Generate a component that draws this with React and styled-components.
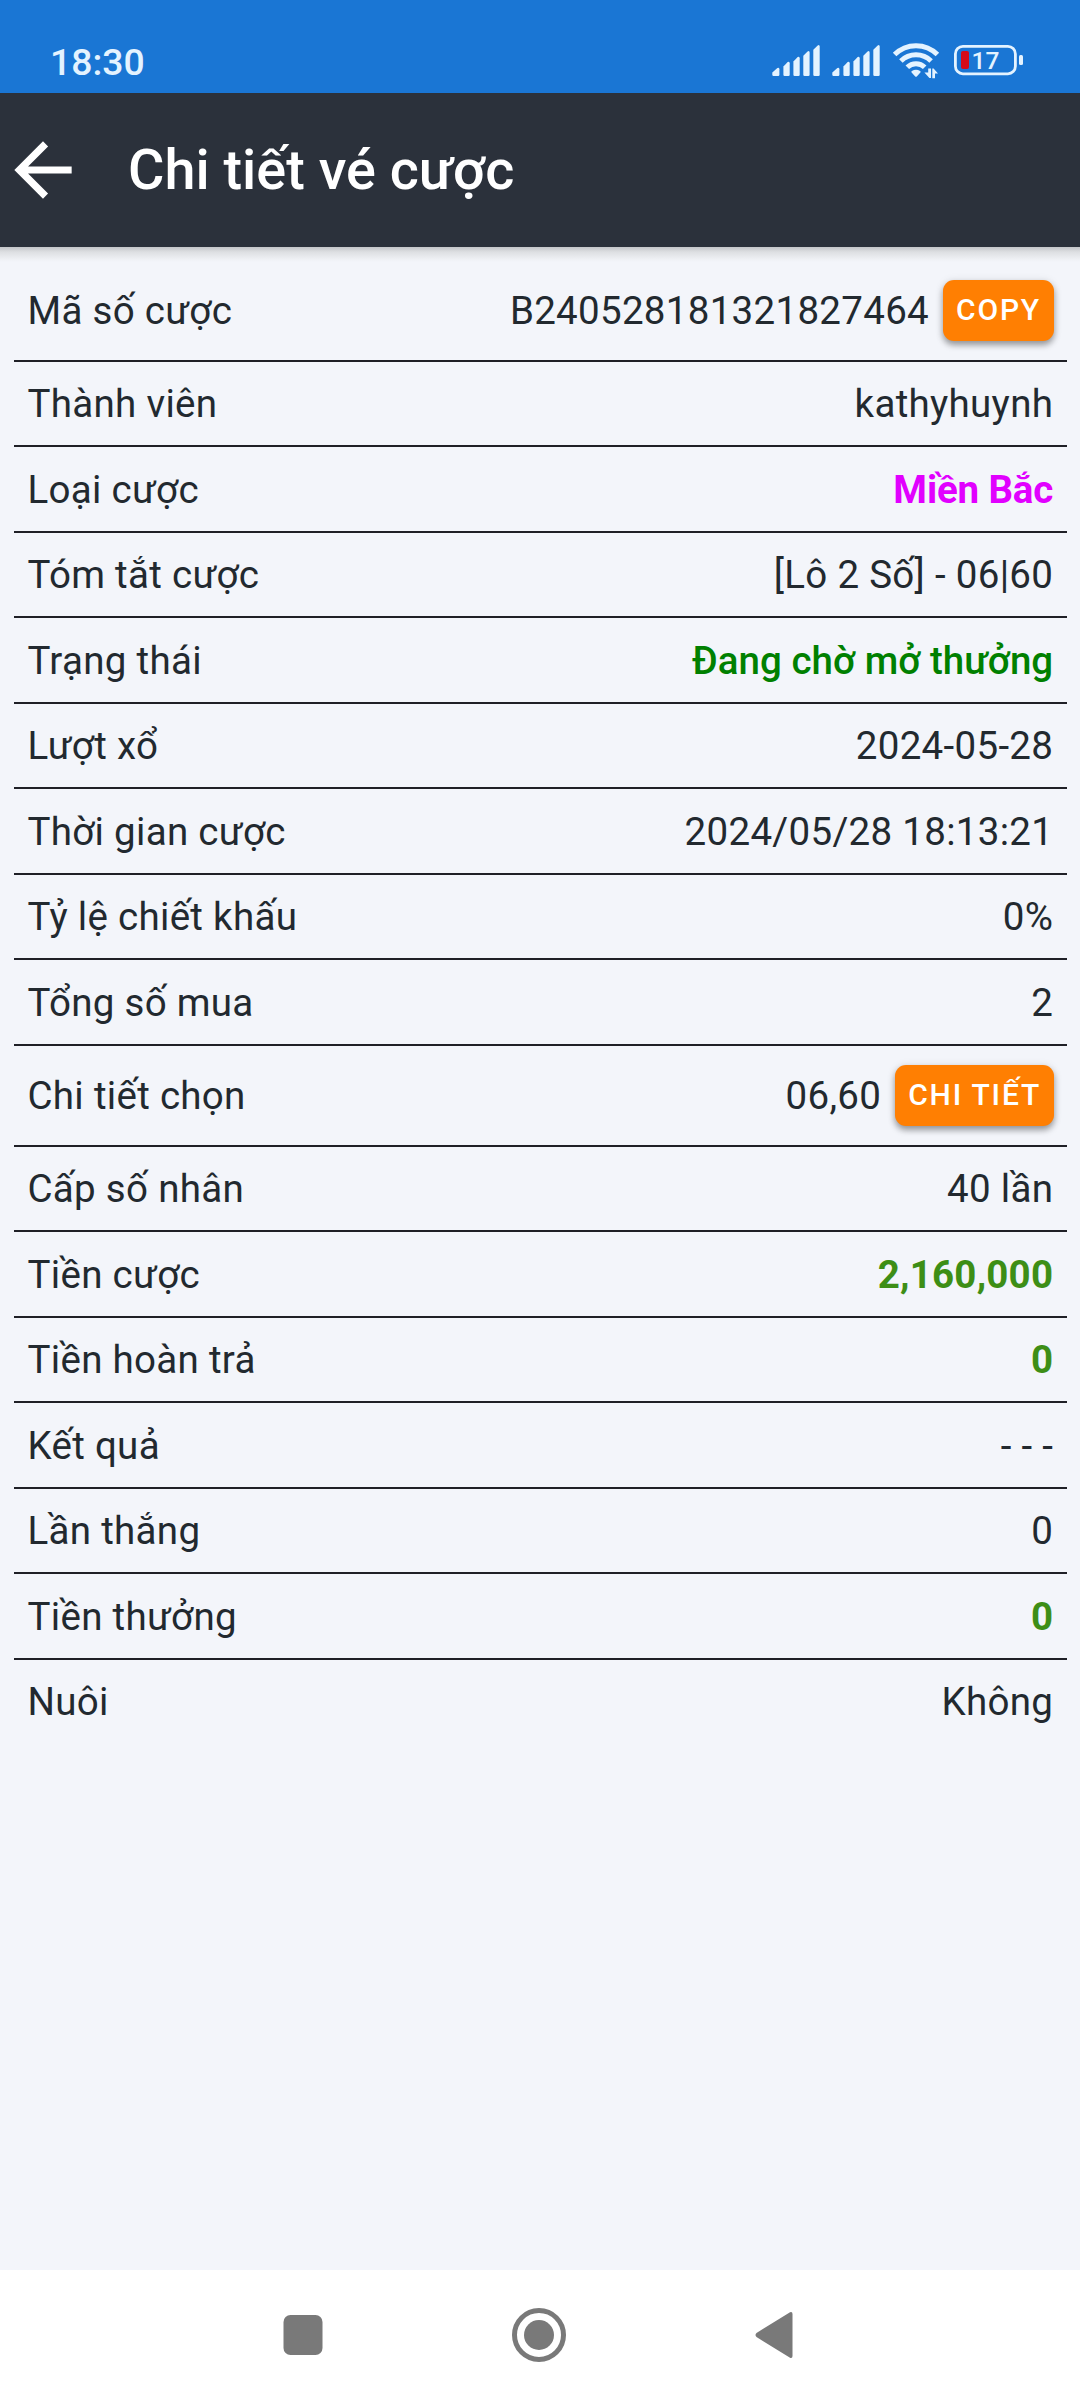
import React from "react";
import styled, { createGlobalStyle } from "styled-components";

const GlobalStyle = createGlobalStyle`
  * {
    box-sizing: border-box;
  }
  body {
    margin: 0;
    background: #f3f5fa;
    font-family: Roboto, "Noto Sans", sans-serif;
  }
`;

const Screen = styled.div`
  display: flex;
  flex-direction: column;
  width: 1080px;
  height: 2400px;
  overflow: hidden;
  background: #f3f5fa;
`;

const StatusBar = styled.div`
  display: flex;
  align-items: flex-start;
  justify-content: space-between;
  flex: none;
  height: 93px;
  padding: 38px 55px 0 50px;
  background: #1a76d4;
`;

const Clock = styled.div`
  color: #e4f3ff;
  font-size: 37.3px;
  font-weight: 500;
  line-height: 48px;
`;

const StatusIcons = styled.svg`
  display: block;
  width: 255px;
  height: 44px;
`;

const Header = styled.header`
  display: flex;
  align-items: center;
  flex: none;
  height: 154px;
  background: #2b313b;
`;

const BackButton = styled.button`
  width: 86px;
  height: 86px;
  padding: 0;
  border: 0;
  background: none;
  cursor: pointer;
  svg {
    display: block;
    width: 86px;
    height: 86px;
  }
`;

const Title = styled.h1`
  margin: 0 0 0 42px;
  color: white;
  font-size: 55.8px;
  font-weight: 500;
  line-height: 70px;
`;

const Rows = styled.div`
  flex: 1;
  padding: 13.9px 13px 0 14px;
  /* shadow under the header */
  background: linear-gradient(#c4c6c9, #dddfe2 5px, #eef0f4 12px, #f3f5fa 15px);
`;

const Row = styled.div`
  display: flex;
  align-items: center;
  justify-content: space-between;
  height: ${(p) => (p.$tall ? "101px" : "85.5px")};
  padding: 0 ${(p) => (p.$tall ? "13px" : "13.8px")} 0 13.5px;
  border-bottom: 2px solid #1f2026;
  color: #22292f;
  font-size: 38.5px;
  letter-spacing: 0.3px;
  line-height: 55px;
  white-space: nowrap;
  &:last-child {
    border-color: transparent;
  }
`;

const Value = styled.div`
  display: flex;
  align-items: center;
  color: ${(p) => p.$color || "inherit"};
  font-weight: ${(p) => p.$weight || 400};
  letter-spacing: ${(p) => p.$spacing || "inherit"};
`;

const Button = styled.button`
  height: 61px;
  margin-left: 14px;
  padding: 0 13px 2px 13px;
  border: 0;
  border-radius: 11px;
  background: #ff7f02;
  box-shadow: 0 4px 6px rgba(0, 0, 0, 0.35), 0 1px 10px rgba(0, 0, 0, 0.1);
  color: white;
  font-family: inherit;
  font-size: 30px;
  font-weight: 500;
  letter-spacing: 1.8px;
  line-height: 59px;
  text-transform: uppercase;
  cursor: pointer;
`;

const NavBar = styled.nav`
  display: flex;
  align-items: center;
  flex: none;
  height: 130px;
  padding-left: 276px;
  gap: 182px;
  background: white;
  svg {
    display: block;
    width: 54px;
    height: 54px;
    fill: #797979;
  }
`;

const money = { color: "#3d8e16", weight: 700, spacing: "0.2px" };

const rows = [
  { label: "Mã số cược", value: "B240528181321827464", action: "Copy" },
  { label: "Thành viên", value: "kathyhuynh" },
  { label: "Loại cược", value: "Miền Bắc", color: "#e100ff", weight: 700, spacing: "-0.15px" },
  { label: "Tóm tắt cược", value: "[Lô 2 Số] - 06|60" },
  { label: "Trạng thái", value: "Đang chờ mở thưởng", color: "#008000", weight: 500, spacing: "0" },
  { label: "Lượt xổ", value: "2024-05-28" },
  { label: "Thời gian cược", value: "2024/05/28 18:13:21" },
  { label: "Tỷ lệ chiết khấu", value: "0%" },
  { label: "Tổng số mua", value: "2" },
  { label: "Chi tiết chọn", value: "06,60", action: "Chi tiết" },
  { label: "Cấp số nhân", value: "40 lần" },
  { label: "Tiền cược", value: "2,160,000", ...money },
  { label: "Tiền hoàn trả", value: "0", ...money },
  { label: "Kết quả", value: "- - -" },
  { label: "Lần thắng", value: "0" },
  { label: "Tiền thưởng", value: "0", ...money },
  { label: "Nuôi", value: "Không" },
];

// [left, width, top] of each signal bar, all stand on y = 38
const bars = [
  [2.3, 7.1, 29.7],
  [13.4, 6.3, 23.7],
  [23.4, 6.3, 18.7],
  [33.3, 6.3, 13],
  [43.3, 6.4, 7],
];

const Signal = ({ x }) => (
  <g transform={`translate(${x} 0)`}>
    {bars.map(([left, w, top]) => (
      <path
        key={left}
        d={`M${left} 36.8V${top + 4.8}L${left + w - 2} ${top + 0.4}Q${left + w} ${top - 0.6} ${left + w} ${top + 1.6}V36.8Q${left + w} 38 ${left + w - 1.2} 38H${left + 1.2}Q${left} 38 ${left} 36.8Z`}
      />
    ))}
  </g>
);

const Wifi = () => (
  <g>
    <g fill="none" stroke="#e4f3ff" strokeWidth="5">
      <path d="M124.6 16.6A30.2 30.2 0 0 1 167.4 16.6" />
      <path d="M130.9 22.9A21.4 21.4 0 0 1 161.1 22.9" />
      <path d="M137.3 29.3A12.3 12.3 0 0 1 154.7 29.3" />
    </g>
    <path d="M141.6 34.6Q140.8 33.8 141.9 33Q146 30.4 150.1 33Q151.2 33.8 150.4 34.6L147 38.2Q146 39.2 145 38.2Z" />
    <path d="M158.2 30.5H161V40H159.4L154.4 34.6H158.2Z" />
    <path d="M162.3 40.3V30.5H163.6L168 35.6H165V40.3Z" />
  </g>
);

const Battery = () => (
  <g>
    <rect x="185.4" y="8.4" width="60" height="27.4" rx="7.5" fill="none" stroke="#e4f3ff" strokeWidth="2.8" />
    <rect x="249" y="17" width="4" height="10" rx="1.5" />
    <rect x="191" y="13" width="8" height="18" rx="2" fill="#d50b17" />
    <text x="201.6" y="31" fontSize="24.5" fontWeight="500" fontFamily="Roboto, sans-serif">
      17
    </text>
  </g>
);

export default function App() {
  return (
    <>
      <GlobalStyle />
      <Screen>
        <StatusBar>
          <Clock>18:30</Clock>
          <StatusIcons viewBox="0 0 255 44" fill="#e4f3ff">
            <Signal x={0} />
            <Signal x={60} />
            <Wifi />
            <Battery />
          </StatusIcons>
        </StatusBar>
        <Header>
          <BackButton aria-label="Back">
            <svg viewBox="0 0 24 24" fill="white">
              <path d="M20 11H7.83l5.59-5.59L12 4l-8 8 8 8 1.41-1.41L7.83 13H20v-2z" />
            </svg>
          </BackButton>
          <Title>Chi tiết vé cược</Title>
        </Header>
        <Rows>
          {rows.map((row) => (
            <Row key={row.label} $tall={!!row.action}>
              <span>{row.label}</span>
              <Value $color={row.color} $weight={row.weight} $spacing={row.spacing}>
                {row.value}
                {row.action && <Button>{row.action}</Button>}
              </Value>
            </Row>
          ))}
        </Rows>
        <NavBar>
          <svg viewBox="0 0 54 54">
            <rect x="7.5" y="7" width="39" height="40" rx="7" />
          </svg>
          <svg viewBox="0 0 54 54">
            <circle cx="27" cy="27" r="24.5" fill="none" stroke="#797979" strokeWidth="5" />
            <circle cx="27" cy="27" r="15" />
          </svg>
          <svg viewBox="0 0 54 54">
            <path d="M8.5 25L42 4.3Q44.5 3.5 44.5 6V48Q44.5 50.5 42 49.7L8.5 29Q6.5 27 8.5 25Z" />
          </svg>
        </NavBar>
      </Screen>
    </>
  );
}
